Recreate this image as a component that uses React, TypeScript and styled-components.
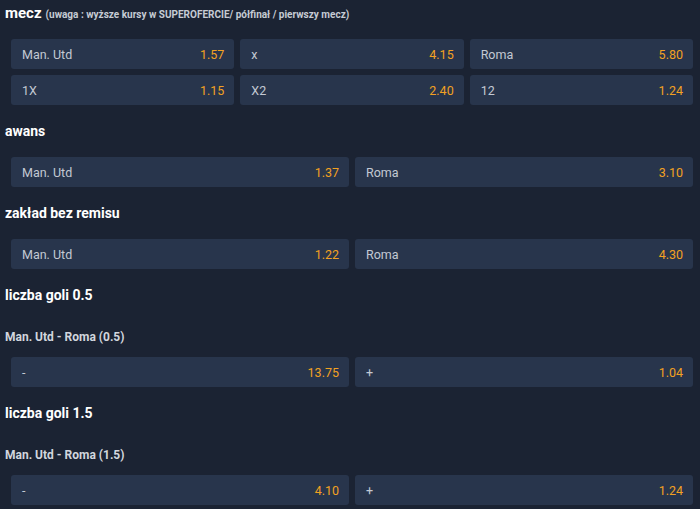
import React from "react";
import styled, { createGlobalStyle } from "styled-components";

const Global = createGlobalStyle`
  html, body { margin: 0; padding: 0; background: #1b2333; }
  body { font-family: Roboto, "Liberation Sans", Arial, sans-serif; }
`;

const Page = styled.div`
  background: #1b2333;
  min-height: 509px;
  padding: 3px 7px 0 5px;
  box-sizing: border-box;
`;

const TitleLine = styled.div`
  height: 20px;
  line-height: 20px;
  display: flex;
  align-items: baseline;
  gap: 4px;
  margin-bottom: 16px;
`;

const Title = styled.span`
  font-size: 15px;
  font-weight: 700;
  color: #ffffff;
`;

const Note = styled.span`
  font-size: 10px;
  font-weight: 700;
  color: #c6cbd4;
`;

const Heading = styled.div`
  font-size: 14px;
  font-weight: 700;
  color: #ffffff;
  line-height: 20px;
  margin: 16px 0 16px;
`;

const SubHeading = styled.div`
  font-size: 12px;
  font-weight: 700;
  color: #d2d6de;
  line-height: 16px;
  margin: 24px 0 12px;
`;

const Grid = styled.div<{ $cols: number }>`
  display: grid;
  grid-template-columns: repeat(${(p) => p.$cols}, 1fr);
  gap: 6px 6px;
  margin-left: 6px;
`;

const Cell = styled.div`
  height: 30px;
  background: #28354c;
  border-radius: 3px;
  display: flex;
  align-items: center;
  justify-content: space-between;
  padding: 0 10px 0 11px;
  font-size: 12.5px;
`;

const Label = styled.span`
  color: #c3c9d3;
`;

const Odd = styled.span`
  color: #f2a122;
`;

type Bet = [string, string];

const Market = ({ cols, bets }: { cols: number; bets: Bet[] }) => (
  <Grid $cols={cols}>
    {bets.map(([l, o], i) => (
      <Cell key={i}>
        <Label>{l}</Label>
        <Odd>{o}</Odd>
      </Cell>
    ))}
  </Grid>
);

export default function App() {
  return (
    <>
      <Global />
      <Page>
        <TitleLine>
          <Title>mecz</Title>
          <Note>(uwaga : wyższe kursy w SUPEROFERCIE/ półfinał / pierwszy mecz)</Note>
        </TitleLine>
        <Market
          cols={3}
          bets={[
            ["Man. Utd", "1.57"],
            ["x", "4.15"],
            ["Roma", "5.80"],
            ["1X", "1.15"],
            ["X2", "2.40"],
            ["12", "1.24"],
          ]}
        />
        <Heading>awans</Heading>
        <Market cols={2} bets={[["Man. Utd", "1.37"], ["Roma", "3.10"]]} />
        <Heading>zakład bez remisu</Heading>
        <Market cols={2} bets={[["Man. Utd", "1.22"], ["Roma", "4.30"]]} />
        <Heading>liczba goli 0.5</Heading>
        <SubHeading>Man. Utd - Roma (0.5)</SubHeading>
        <Market cols={2} bets={[["-", "13.75"], ["+", "1.04"]]} />
        <Heading>liczba goli 1.5</Heading>
        <SubHeading>Man. Utd - Roma (1.5)</SubHeading>
        <Market cols={2} bets={[["-", "4.10"], ["+", "1.24"]]} />
      </Page>
    </>
  );
}
